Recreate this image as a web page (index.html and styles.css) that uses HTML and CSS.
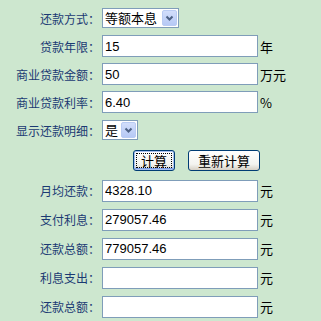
FILE: index.html
```html
<!DOCTYPE html>
<html>
<head>
  <meta charset="utf-8">
  <title>贷款计算器</title>
  <link rel="stylesheet" href="styles.css">
</head>
<body>
  <form class="calc" id="loanForm">
    <div class="row">
      <label class="lbl">还款方式：</label>
      <span class="sel">
        <select class="sel-wide"><option>等额本息</option><option>等额本金</option></select>
        <span class="arrow"><svg width="13" height="14" viewBox="0 0 13 14"><path d="M3.5 5.5 L6.5 8.5 L9.5 5.5" fill="none" stroke="#4d6185" stroke-width="2"/></svg></span>
      </span>
    </div>
    <div class="row">
      <label class="lbl">贷款年限：</label>
      <input class="field" type="text" value="15">
      <span class="unit">年</span>
    </div>
    <div class="row">
      <label class="lbl">商业贷款金额：</label>
      <input class="field" type="text" value="50">
      <span class="unit">万元</span>
    </div>
    <div class="row">
      <label class="lbl">商业贷款利率：</label>
      <input class="field" type="text" value="6.40">
      <span class="unit">%</span>
    </div>
    <div class="row">
      <label class="lbl">显示还款明细：</label>
      <span class="sel">
        <select class="sel-small"><option>是</option><option>否</option></select>
        <span class="arrow"><svg width="13" height="14" viewBox="0 0 13 14"><path d="M3.5 5.5 L6.5 8.5 L9.5 5.5" fill="none" stroke="#4d6185" stroke-width="2"/></svg></span>
      </span>
    </div>
    <div class="actions">
      <button type="button" class="btn btn-default">计算</button>
      <button type="reset" class="btn btn-wide">重新计算</button>
    </div>
    <div class="row low">
      <label class="lbl">月均还款：</label>
      <input class="field" type="text" value="4328.10">
      <span class="unit">元</span>
    </div>
    <div class="row low">
      <label class="lbl">支付利息：</label>
      <input class="field" type="text" value="279057.46">
      <span class="unit">元</span>
    </div>
    <div class="row low">
      <label class="lbl">还款总额：</label>
      <input class="field" type="text" value="779057.46">
      <span class="unit">元</span>
    </div>
    <div class="row low">
      <label class="lbl">利息支出：</label>
      <input class="field" type="text" value="">
      <span class="unit">元</span>
    </div>
    <div class="row low">
      <label class="lbl">还款总额：</label>
      <input class="field" type="text" value="">
      <span class="unit">元</span>
    </div>
  </form>
</body>
</html>
```

FILE: styles.css
```css
body {
  margin: 0;
  background-color: #cde7cf;
  font-family: "Noto Sans CJK SC", sans-serif;
  font-size: 12px;
}
.calc {
  padding-top: 4px;
}
.row {
  display: flex;
  align-items: center;
  height: 28px;
}
.row.low {
  height: 29px;
}
.lbl {
  flex: none;
  width: 100px;
  text-align: right;
  color: #1b3a73;
}
.field {
  margin: 0 0 0 2px;
  width: 156px;
  height: 22px;
  box-sizing: border-box;
  border: 1px solid #7f9db9;
  padding: 0 2px;
  background: #fff;
  font-family: "Liberation Sans", Arial, sans-serif;
  font-size: 13px;
  color: #000;
}
.unit {
  margin-left: 2px;
  font-size: 13px;
  color: #000;
}
.sel {
  position: relative;
  display: inline-block;
  margin-left: 2px;
  height: 20px;
}
.sel select {
  -webkit-appearance: none;
  appearance: none;
  height: 20px;
  box-sizing: border-box;
  border: 1px solid #7f9db9;
  border-radius: 0;
  padding: 0 0 0 2px;
  background: #fff;
  font-family: "Noto Sans CJK SC", sans-serif;
  font-size: 13px;
  line-height: 18px;
  color: #000;
}
.sel-wide {
  width: 77px;
}
.sel-small {
  width: 36px;
}
.arrow {
  position: absolute;
  top: 2px;
  right: 2px;
  width: 15px;
  height: 16px;
  box-sizing: border-box;
  border: 1px solid #b9cbf3;
  border-radius: 2px;
  background: linear-gradient(#d2defb, #b6c9f5);
  display: flex;
  align-items: center;
  justify-content: center;
  pointer-events: none;
}
.actions {
  display: flex;
  align-items: center;
  gap: 13px;
  height: 32px;
  padding-left: 133px;
}
.btn {
  height: 21px;
  padding: 0;
  border: 1px solid #003c74;
  border-radius: 3px;
  background: linear-gradient(#ffffff, #f3f3ef 70%, #d6d0c5);
  font-family: "Noto Sans CJK SC", sans-serif;
  font-size: 13px;
  line-height: 17px;
  color: #000;
  cursor: pointer;
}
.btn-default {
  width: 42px;
  box-shadow: inset 0 0 0 1px #a8c0f0, inset 0 -1px 0 1px #7a9ce6;
  outline: 1px dotted #000;
  outline-offset: -4px;
}
.btn-wide {
  width: 72px;
}
```
